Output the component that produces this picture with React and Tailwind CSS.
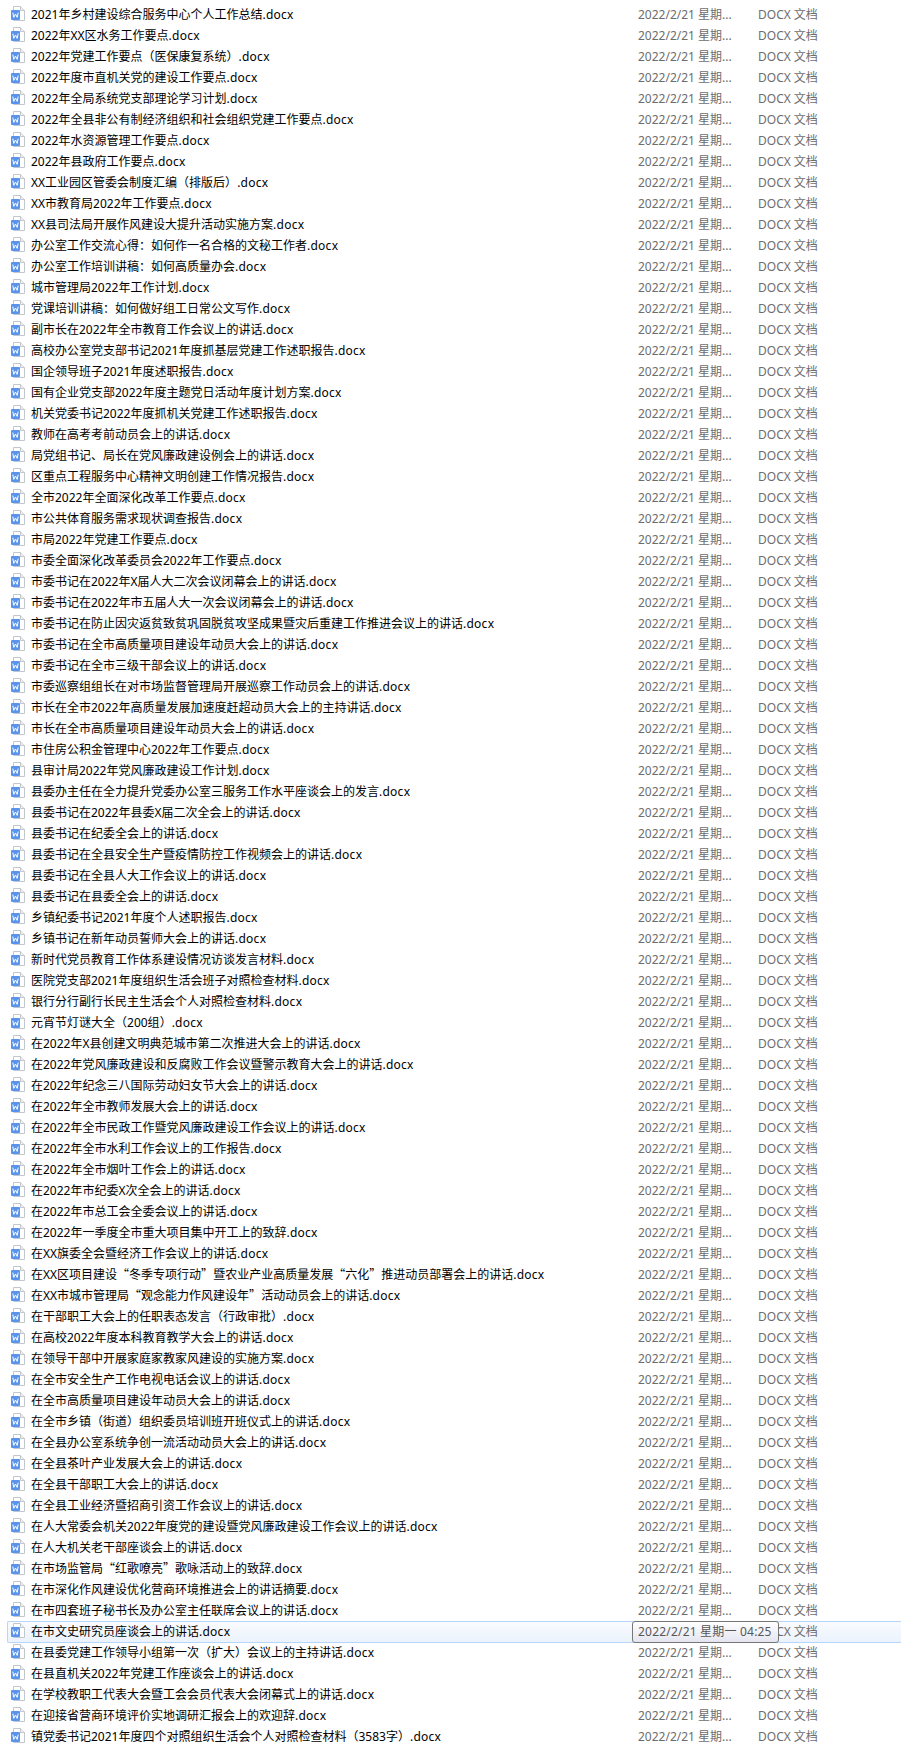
const FILES = `2021年乡村建设综合服务中心个人工作总结.docx
2022年XX区水务工作要点.docx
2022年党建工作要点（医保康复系统）.docx
2022年度市直机关党的建设工作要点.docx
2022年全局系统党支部理论学习计划.docx
2022年全县非公有制经济组织和社会组织党建工作要点.docx
2022年水资源管理工作要点.docx
2022年县政府工作要点.docx
XX工业园区管委会制度汇编（排版后）.docx
XX市教育局2022年工作要点.docx
XX县司法局开展作风建设大提升活动实施方案.docx
办公室工作交流心得：如何作一名合格的文秘工作者.docx
办公室工作培训讲稿：如何高质量办会.docx
城市管理局2022年工作计划.docx
党课培训讲稿：如何做好组工日常公文写作.docx
副市长在2022年全市教育工作会议上的讲话.docx
高校办公室党支部书记2021年度抓基层党建工作述职报告.docx
国企领导班子2021年度述职报告.docx
国有企业党支部2022年度主题党日活动年度计划方案.docx
机关党委书记2022年度抓机关党建工作述职报告.docx
教师在高考考前动员会上的讲话.docx
局党组书记、局长在党风廉政建设例会上的讲话.docx
区重点工程服务中心精神文明创建工作情况报告.docx
全市2022年全面深化改革工作要点.docx
市公共体育服务需求现状调查报告.docx
市局2022年党建工作要点.docx
市委全面深化改革委员会2022年工作要点.docx
市委书记在2022年X届人大二次会议闭幕会上的讲话.docx
市委书记在2022年市五届人大一次会议闭幕会上的讲话.docx
市委书记在防止因灾返贫致贫巩固脱贫攻坚成果暨灾后重建工作推进会议上的讲话.docx
市委书记在全市高质量项目建设年动员大会上的讲话.docx
市委书记在全市三级干部会议上的讲话.docx
市委巡察组组长在对市场监督管理局开展巡察工作动员会上的讲话.docx
市长在全市2022年高质量发展加速度赶超动员大会上的主持讲话.docx
市长在全市高质量项目建设年动员大会上的讲话.docx
市住房公积金管理中心2022年工作要点.docx
县审计局2022年党风廉政建设工作计划.docx
县委办主任在全力提升党委办公室三服务工作水平座谈会上的发言.docx
县委书记在2022年县委X届二次全会上的讲话.docx
县委书记在纪委全会上的讲话.docx
县委书记在全县安全生产暨疫情防控工作视频会上的讲话.docx
县委书记在全县人大工作会议上的讲话.docx
县委书记在县委全会上的讲话.docx
乡镇纪委书记2021年度个人述职报告.docx
乡镇书记在新年动员誓师大会上的讲话.docx
新时代党员教育工作体系建设情况访谈发言材料.docx
医院党支部2021年度组织生活会班子对照检查材料.docx
银行分行副行长民主生活会个人对照检查材料.docx
元宵节灯谜大全（200组）.docx
在2022年X县创建文明典范城市第二次推进大会上的讲话.docx
在2022年党风廉政建设和反腐败工作会议暨警示教育大会上的讲话.docx
在2022年纪念三八国际劳动妇女节大会上的讲话.docx
在2022年全市教师发展大会上的讲话.docx
在2022年全市民政工作暨党风廉政建设工作会议上的讲话.docx
在2022年全市水利工作会议上的工作报告.docx
在2022年全市烟叶工作会上的讲话.docx
在2022年市纪委X次全会上的讲话.docx
在2022年市总工会全委会议上的讲话.docx
在2022年一季度全市重大项目集中开工上的致辞.docx
在XX旗委全会暨经济工作会议上的讲话.docx
在XX区项目建设“冬季专项行动”暨农业产业高质量发展“六化”推进动员部署会上的讲话.docx
在XX市城市管理局“观念能力作风建设年”活动动员会上的讲话.docx
在干部职工大会上的任职表态发言（行政审批）.docx
在高校2022年度本科教育教学大会上的讲话.docx
在领导干部中开展家庭家教家风建设的实施方案.docx
在全市安全生产工作电视电话会议上的讲话.docx
在全市高质量项目建设年动员大会上的讲话.docx
在全市乡镇（街道）组织委员培训班开班仪式上的讲话.docx
在全县办公室系统争创一流活动动员大会上的讲话.docx
在全县茶叶产业发展大会上的讲话.docx
在全县干部职工大会上的讲话.docx
在全县工业经济暨招商引资工作会议上的讲话.docx
在人大常委会机关2022年度党的建设暨党风廉政建设工作会议上的讲话.docx
在人大机关老干部座谈会上的讲话.docx
在市场监管局“红歌嘹亮”歌咏活动上的致辞.docx
在市深化作风建设优化营商环境推进会上的讲话摘要.docx
在市四套班子秘书长及办公室主任联席会议上的讲话.docx
在市文史研究员座谈会上的讲话.docx
在县委党建工作领导小组第一次（扩大）会议上的主持讲话.docx
在县直机关2022年党建工作座谈会上的讲话.docx
在学校教职工代表大会暨工会会员代表大会闭幕式上的讲话.docx
在迎接省营商环境评价实地调研汇报会上的欢迎辞.docx
镇党委书记2021年度四个对照组织生活会个人对照检查材料（3583字）.docx`.split('\n');

const HOVER_INDEX = 77;

function DocIcon({ hovered }) {
  return (
    <svg
      width="16"
      height="16"
      viewBox="0 0 16 16"
      className={`shrink-0 self-start ${hovered ? 'mt-[1px]' : 'mt-[2px]'}`}
    >
      <path d="M3.5 .5h7l4 4v10h-11z" fill="#fff" stroke="#c2c6cd" />
      <path d="M10.5 .5v4h4" fill="#eef0f3" stroke="#c2c6cd" />
      <rect x="1" y="4" width="9" height="10" rx="1" fill="#5a93ec" />
      <path d="M2.8 6.6l1 4.8 1.7-3.4 1.7 3.4 1-4.8" fill="none" stroke="#fff" strokeWidth="1" />
    </svg>
  );
}

// quotes and brackets need the full-width CJK glyphs, the Latin font would make them narrow
function FileName({ name }) {
  const parts = name.slice(0, -5).split(/([“”（）])/);
  return (
    <span className="ml-[5px] w-[607px] shrink-0 truncate text-black">
      {parts.map((part, i) =>
        i % 2 === 1 ? (
          <span key={i} className="font-['Noto_Sans_CJK_TC',sans-serif]">{part}</span>
        ) : (
          part
        )
      )}
      <span className="tracking-[0.25px]">.docx</span>
    </span>
  );
}

function FileRow({ name, hovered }) {
  const rowClass = hovered
    ? 'relative z-10 mb-[-1px] ml-[7px] h-[22px] rounded-l-[2px] border border-r-0 border-[#b8d6fb] bg-gradient-to-b from-[#fafbfd] to-[#ebf3fd] pl-[2px]'
    : 'h-[21px] pl-[10px]';
  return (
    <div className={`flex items-center ${rowClass}`}>
      <DocIcon hovered={hovered} />
      <FileName name={name} />
      <span className="w-[120px] shrink-0 text-[#6d6d6d]">2022/2/21 星期...</span>
      <span className="text-[#6d6d6d]">DOCX 文档</span>
      {hovered && (
        <div className="absolute left-[624px] top-[-1px] flex h-[22px] w-[147px] items-center rounded-[3px] border border-[#767676] bg-gradient-to-b from-white to-[#e4e5f0] pl-[5px] tracking-[0.2px] text-[#575757]">
          2022/2/21 星期一 04:25
        </div>
      )}
    </div>
  );
}

export default function App() {
  return (
    <div className="h-[1744px] overflow-hidden bg-white pt-[4px] font-['Noto_Sans','Noto_Sans_CJK_SC',sans-serif] text-[12px] leading-[16px]">
      {FILES.map((name, i) => (
        <FileRow key={name} name={name} hovered={i === HOVER_INDEX} />
      ))}
    </div>
  );
}
